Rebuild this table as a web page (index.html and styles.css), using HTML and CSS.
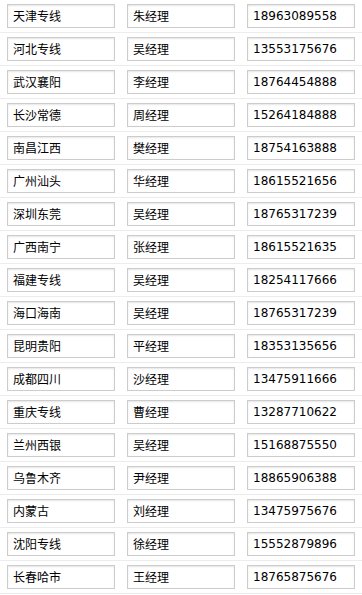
FILE: index.html
```html
<!DOCTYPE html>
<html lang="zh-CN">
<head>
<meta charset="utf-8">
<title>联系方式</title>
<link rel="stylesheet" href="styles.css">
</head>
<body>
<div class="list">
  <div class="row"><span class="box">天津专线</span><span class="box">朱经理</span><span class="box num">18963089558</span></div>
  <div class="row"><span class="box">河北专线</span><span class="box">吴经理</span><span class="box num">13553175676</span></div>
  <div class="row"><span class="box">武汉襄阳</span><span class="box">李经理</span><span class="box num">18764454888</span></div>
  <div class="row"><span class="box">长沙常德</span><span class="box">周经理</span><span class="box num">15264184888</span></div>
  <div class="row"><span class="box">南昌江西</span><span class="box">樊经理</span><span class="box num">18754163888</span></div>
  <div class="row"><span class="box">广州汕头</span><span class="box">华经理</span><span class="box num">18615521656</span></div>
  <div class="row"><span class="box">深圳东莞</span><span class="box">吴经理</span><span class="box num">18765317239</span></div>
  <div class="row"><span class="box">广西南宁</span><span class="box">张经理</span><span class="box num">18615521635</span></div>
  <div class="row"><span class="box">福建专线</span><span class="box">吴经理</span><span class="box num">18254117666</span></div>
  <div class="row"><span class="box">海口海南</span><span class="box">吴经理</span><span class="box num">18765317239</span></div>
  <div class="row"><span class="box">昆明贵阳</span><span class="box">平经理</span><span class="box num">18353135656</span></div>
  <div class="row"><span class="box">成都四川</span><span class="box">沙经理</span><span class="box num">13475911666</span></div>
  <div class="row"><span class="box">重庆专线</span><span class="box">曹经理</span><span class="box num">13287710622</span></div>
  <div class="row"><span class="box">兰州西银</span><span class="box">吴经理</span><span class="box num">15168875550</span></div>
  <div class="row"><span class="box">乌鲁木齐</span><span class="box">尹经理</span><span class="box num">18865906388</span></div>
  <div class="row"><span class="box">内蒙古</span><span class="box">刘经理</span><span class="box num">13475975676</span></div>
  <div class="row"><span class="box">沈阳专线</span><span class="box">徐经理</span><span class="box num">15552879896</span></div>
  <div class="row"><span class="box">长春哈市</span><span class="box">王经理</span><span class="box num">18765875676</span></div>
</div>
</body>
</html>
```
FILE: styles.css
```css
html, body {
  margin: 0;
  padding: 0;
  background: #fff;
}
body {
  font-family: "DejaVu Sans", "Noto Sans CJK SC", sans-serif;
  font-size: 12px;
  color: #000;
}
.list {
  width: 362px;
}
.row {
  display: flex;
  gap: 12px;
  padding: 4px 0 4px 7px;
  border-bottom: 1px solid #ececec;
}
.box {
  box-sizing: border-box;
  width: 108px;
  height: 24px;
  border: 1px solid #cccccc;
  box-shadow: inset 0 1px 2px rgba(0, 0, 0, 0.1);
  background: #fff;
  display: flex;
  align-items: center;
  padding-left: 5px;
  font-family: "Noto Sans CJK SC", sans-serif;
  line-height: 1;
}
.num {
  font-family: "DejaVu Sans", sans-serif;
}
```
